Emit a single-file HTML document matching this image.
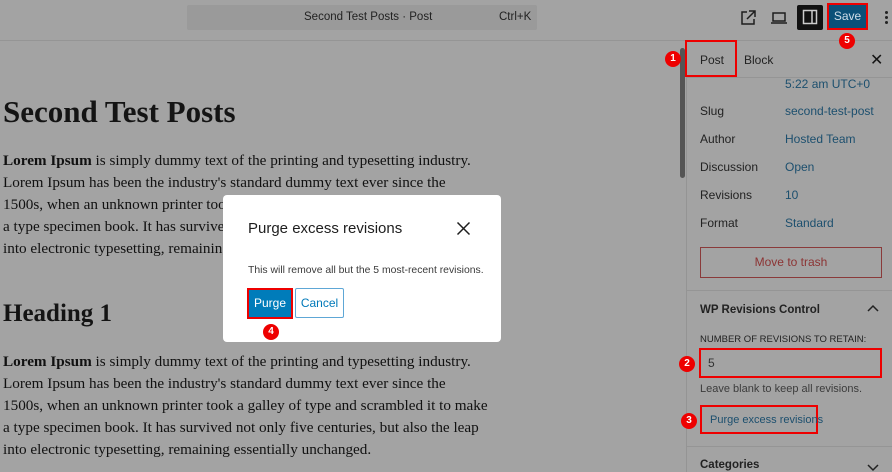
<!DOCTYPE html>
<html><head><style>
*{box-sizing:border-box;margin:0;padding:0}
body{width:892px;height:472px;overflow:hidden;background:#a3a3a3;font-family:"Liberation Sans",sans-serif;position:relative;color:#141414}
.abs{position:absolute;white-space:nowrap}
.serif{font-family:"Liberation Serif",serif}
p.t{position:absolute;left:3px;font-size:15.2px;line-height:22px;color:#111;width:490px;white-space:nowrap}
.sb{font-size:12px;color:#222}
.lnk{color:#1c4f6e}
.red{border:2px solid #e00}
.num{position:absolute;width:16px;height:16px;border-radius:50%;background:#e00;color:#fff;font-size:10px;font-weight:bold;text-align:center;line-height:16px}
</style></head><body>
<div class="abs" style="left:0;top:40px;width:892px;height:1px;background:#959595"></div>
<div class="abs" style="left:187px;top:5px;width:350px;height:25px;background:#9a9a9a;border-radius:2px;font-size:11.5px;color:#222">
<span class="abs" style="left:117px;top:6px">Second Test Posts · Post</span><span class="abs" style="left:312px;top:6px">Ctrl+K</span></div>
<svg class="abs" style="left:739px;top:9px" width="18" height="18" viewBox="0 0 18 18" fill="none" stroke="#1e1e1e" stroke-width="1.5"><path d="M8 3H3v12h12v-5"/><path d="M10 2h6v6M16 2L8 10"/></svg>
<svg class="abs" style="left:770px;top:10px" width="18" height="16" viewBox="0 0 18 16" fill="none" stroke="#1e1e1e" stroke-width="1.5"><rect x="3" y="3" width="12" height="8"/><path d="M1 13h16"/></svg>
<div class="abs" style="left:797px;top:5px;width:26px;height:25px;background:#111;border-radius:2px"></div>
<svg class="abs" style="left:802px;top:9px" width="16" height="16" viewBox="0 0 16 16" fill="none" stroke="#ccc" stroke-width="1.5"><rect x="1.5" y="1.5" width="13" height="13"/><path d="M10 2v12"/></svg>
<div class="abs red" style="left:827px;top:3px;width:41px;height:27px;background:#0b5078;color:#cfdde8;font-size:12px;text-align:center;line-height:23px">Save</div>
<div class="num" style="left:839px;top:33px">5</div>
<div class="abs" style="left:885px;top:11px;width:3px;height:3px;background:#222;border-radius:50%;box-shadow:0 5px 0 #222,0 10px 0 #222"></div>
<div class="abs serif" style="left:3px;top:94px;font-size:31px;font-weight:bold">Second Test Posts</div>
<p class="t serif" style="top:150px"><b>Lorem Ipsum</b> is simply dummy text of the printing and typesetting industry.<br>Lorem Ipsum has been the industry's standard dummy text ever since the<br>1500s, when an unknown printer took a galley of type and scrambled it to make<br>a type specimen book. It has survived not only five centuries, but also the leap<br>into electronic typesetting, remaining essentially unchanged.</p>
<div class="abs serif" style="left:3px;top:300px;font-size:25px;font-weight:bold">Heading 1</div>
<p class="t serif" style="top:351px"><b>Lorem Ipsum</b> is simply dummy text of the printing and typesetting industry.<br>Lorem Ipsum has been the industry's standard dummy text ever since the<br>1500s, when an unknown printer took a galley of type and scrambled it to make<br>a type specimen book. It has survived not only five centuries, but also the leap<br>into electronic typesetting, remaining essentially unchanged.</p>
<div class="abs" style="left:680px;top:48px;width:5px;height:130px;background:#555;border-radius:3px"></div>
<div class="abs" style="left:686px;top:41px;width:1px;height:431px;background:#949494"></div>
<div class="abs" style="left:687px;top:77px;width:205px;height:1px;background:#959595"></div>
<div class="abs red" style="left:685px;top:40px;width:52px;height:37px"></div>
<div class="num" style="left:665px;top:51px">1</div>
<div class="abs sb" style="left:700px;top:53px">Post</div>
<div class="abs sb" style="left:744px;top:53px">Block</div>
<div class="abs" style="left:870px;top:50px;font-size:16px">✕</div>
<div class="abs sb lnk" style="left:785px;top:77px">5:22 am UTC+0</div>
<div class="abs sb" style="left:700px;top:104px">Slug</div><div class="abs sb lnk" style="left:785px;top:104px">second-test-post</div>
<div class="abs sb" style="left:700px;top:132px">Author</div><div class="abs sb lnk" style="left:785px;top:132px">Hosted Team</div>
<div class="abs sb" style="left:700px;top:160px">Discussion</div><div class="abs sb lnk" style="left:785px;top:160px">Open</div>
<div class="abs sb" style="left:700px;top:188px">Revisions</div><div class="abs sb lnk" style="left:785px;top:188px">10</div>
<div class="abs sb" style="left:700px;top:216px">Format</div><div class="abs sb lnk" style="left:785px;top:216px">Standard</div>
<div class="abs" style="left:700px;top:247px;width:182px;height:31px;border:1px solid #8a3a3a;color:#8c3434;font-size:12px;text-align:center;line-height:29px">Move to trash</div>
<div class="abs" style="left:687px;top:290px;width:205px;height:1px;background:#959595"></div>
<div class="abs sb" style="left:700px;top:304px;font-weight:bold;font-size:11.5px">WP Revisions Control</div>
<svg class="abs" style="left:866px;top:304px" width="14" height="10" viewBox="0 0 14 10" fill="none" stroke="#222" stroke-width="1.5"><path d="M2 7l5-5 5 5"/></svg>
<div class="abs" style="left:700px;top:334px;font-size:9.5px;color:#222">NUMBER OF REVISIONS TO RETAIN:</div>
<div class="abs red" style="left:699px;top:348px;width:183px;height:30px;font-size:12px;color:#333;padding:6px 7px">5</div>
<div class="num" style="left:679px;top:356px">2</div>
<div class="abs" style="left:700px;top:383px;font-size:11px;color:#3c3c3c">Leave blank to keep all revisions.</div>
<div class="abs red" style="left:700px;top:405px;width:118px;height:29px;color:#1c4f6e;font-size:11px;line-height:27px;padding-left:8px">Purge excess revisions</div>
<div class="num" style="left:681px;top:413px">3</div>
<div class="abs" style="left:687px;top:446px;width:205px;height:1px;background:#959595"></div>
<div class="abs sb" style="left:700px;top:459px;font-weight:bold;font-size:11.5px">Categories</div>
<svg class="abs" style="left:866px;top:462px" width="14" height="10" viewBox="0 0 14 10" fill="none" stroke="#222" stroke-width="1.5"><path d="M2 3l5 5 5-5"/></svg>
<div class="abs" style="left:223px;top:195px;width:278px;height:147px;background:#fff;border-radius:4px">
<div class="abs" style="left:25px;top:25px;font-size:15px;color:#1e1e1e">Purge excess revisions</div>
<svg class="abs" style="left:233px;top:26px" width="15" height="15" viewBox="0 0 15 15" stroke="#1e1e1e" stroke-width="1.5"><path d="M1.5 1.5l12 12M13.5 1.5l-12 12"/></svg>
<div class="abs" style="left:25px;top:70px;font-size:10.4px;color:#3a3a3a">This will remove all but the 5 most-recent revisions.</div>
<div class="abs red" style="left:24px;top:93px;width:46px;height:31px;background:#007cba;color:#fff;font-size:12px;text-align:center;line-height:27px">Purge</div>
<div class="abs" style="left:72px;top:93px;width:49px;height:30px;border:1px solid #5ea7d6;border-radius:2px;color:#0079b9;font-size:12px;text-align:center;line-height:28px">Cancel</div>
</div>
<div class="num" style="left:263px;top:324px">4</div>
</body></html>
